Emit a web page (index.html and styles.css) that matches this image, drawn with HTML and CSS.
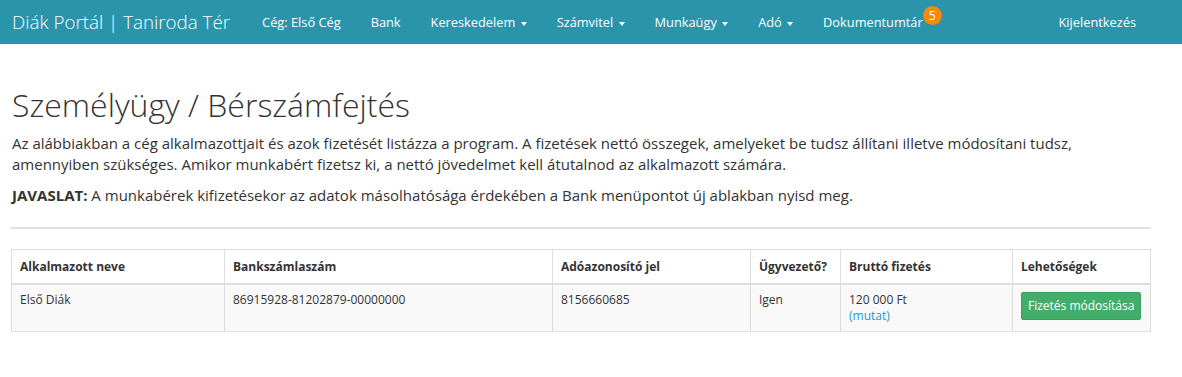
FILE: index.html
```html
<!DOCTYPE html>
<html lang="hu">
<head>
<meta charset="utf-8">
<title>Diák Portál</title>
<link rel="stylesheet" href="styles.css">
</head>
<body>
<nav class="navbar">
  <a class="brand">Diák Portál | Taniroda Tér</a>
  <ul class="nav">
    <li><a>Cég: Első Cég</a></li>
    <li><a>Bank</a></li>
    <li><a>Kereskedelem <span class="caret"></span></a></li>
    <li><a>Számvitel <span class="caret"></span></a></li>
    <li><a>Munkaügy <span class="caret"></span></a></li>
    <li><a>Adó <span class="caret"></span></a></li>
    <li><a class="docs">Dokumentumtár<span class="badge">5</span></a></li>
  </ul>
  <ul class="nav nav-right">
    <li><a>Kijelentkezés</a></li>
  </ul>
</nav>
<main class="container">
  <h1 class="title">Személyügy / Bérszámfejtés</h1>
  <p class="lead">Az alábbiakban a cég alkalmazottjait és azok fizetését listázza a program. A fizetések nettó összegek, amelyeket be tudsz állítani illetve módosítani tudsz, amennyiben szükséges. Amikor munkabért fizetsz ki, a nettó jövedelmet kell átutalnod az alkalmazott számára.</p>
  <p class="lead"><strong>JAVASLAT:</strong> A munkabérek kifizetésekor az adatok másolhatósága érdekében a Bank menüpontot új ablakban nyisd meg.</p>
  <hr class="divider">
  <table class="table">
    <colgroup>
      <col class="c1"><col class="c2"><col class="c3"><col class="c4"><col class="c5"><col class="c6">
    </colgroup>
    <thead>
      <tr>
        <th>Alkalmazott neve</th>
        <th>Bankszámlaszám</th>
        <th>Adóazonosító jel</th>
        <th>Ügyvezető?</th>
        <th>Bruttó fizetés</th>
        <th>Lehetőségek</th>
      </tr>
    </thead>
    <tbody>
      <tr>
        <td>Első Diák</td>
        <td>86915928-81202879-00000000</td>
        <td>8156660685</td>
        <td>Igen</td>
        <td>120 000 Ft<br><a class="link">(mutat)</a></td>
        <td><button class="btn">Fizetés módosítása</button></td>
      </tr>
    </tbody>
  </table>
</main>
</body>
</html>
```

FILE: styles.css
```css
* { box-sizing: border-box; }
body {
  margin: 0;
  font-family: "Open Sans", "Noto Sans", sans-serif;
  color: #333;
  background: #fff;
}
.navbar {
  display: flex;
  align-items: center;
  height: 44px;
  background: #2a94aa;
  padding: 0 31px 0 12px;
}
.brand {
  font-size: 18.8px;
  font-weight: 300;
  color: #fff;
  margin-right: 17px;
  white-space: nowrap;
}
.nav {
  display: flex;
  list-style: none;
  margin: 0;
  padding: 0;
}
.nav-right { margin-left: auto; }
.nav a {
  display: block;
  position: relative;
  padding: 12px 15px;
  font-size: 12.8px;
  color: #fff;
  white-space: nowrap;
}
.caret {
  display: inline-block;
  width: 0;
  height: 0;
  margin-left: 2px;
  vertical-align: middle;
  border-top: 4px solid #fff;
  border-left: 3.5px solid transparent;
  border-right: 3.5px solid transparent;
}
.badge {
  position: absolute;
  top: 5px;
  right: -4px;
  min-width: 19px;
  height: 19px;
  padding: 0 5px;
  border-radius: 10px;
  background: #f7890c;
  color: #fff;
  font-size: 12px;
  line-height: 19px;
  text-align: center;
}
.container {
  padding: 0 31px 0 11px;
}
.title {
  font-size: 32px;
  font-weight: 300;
  margin: 43px 0 11px 1px;
  line-height: 1.1;
  color: #333;
}
.lead {
  font-size: 15px;
  line-height: 21px;
  margin: 0 0 10px 1px;
}
.lead strong { font-weight: 700; }
.divider {
  border: 0;
  border-top: 2px solid #e1e1e1;
  margin: 21px 0 20px 0;
}
.table {
  width: 100%;
  table-layout: fixed;
  border-collapse: collapse;
  font-size: 12px;
}
.table th, .table td {
  border: 1px solid #dddddd;
  text-align: left;
  vertical-align: top;
  white-space: nowrap;
}
.table th {
  font-weight: 700;
  padding: 8px;
  line-height: 17px;
  border-bottom: 2px solid #dddddd;
}
.table td {
  padding: 7px 8px;
  line-height: 16px;
}
.table tbody tr { background: #f9f9f9; }
.c1 { width: 213px; }
.c2 { width: 328px; }
.c3 { width: 198px; }
.c4 { width: 90px; }
.c5 { width: 172px; }
.c6 { width: 138px; }
.link { color: #2a94d0; }
.btn {
  font-family: inherit;
  font-size: 12px;
  color: #fff;
  background: #43ad6a;
  border: 1px solid #3c9e60;
  border-radius: 2px;
  padding: 5px 6px;
  line-height: 16px;
  margin: 0;
  white-space: nowrap;
}
```
